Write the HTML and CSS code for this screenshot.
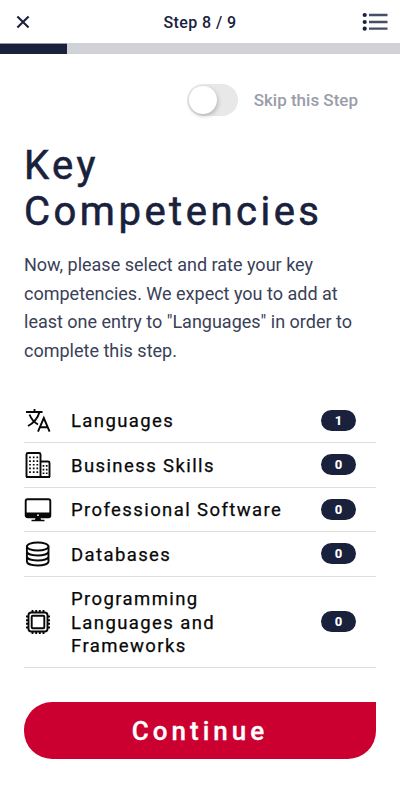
FILE: index.html
```html
<!DOCTYPE html>
<html lang="en">
<head>
<meta charset="utf-8">
<title>Key Competencies</title>
<link rel="stylesheet" href="styles.css">
</head>
<body>
<header class="topbar">
  <svg class="close" viewBox="0 0 14 14"><path d="M1.4 1.4 12.6 12.6M12.6 1.4 1.4 12.6"/></svg>
  <span class="step">Step 8 / 9</span>
  <svg class="menu" viewBox="0 0 26 20"><path d="M6.500 3H25M6.500 10H25M6.500 16.700H25"/><circle cx="2.200" cy="3" r="2.100"/><circle cx="2.200" cy="10" r="2.100"/><circle cx="2.200" cy="16.700" r="2.100"/></svg>
</header>
<div class="progress"><div class="progress-fill"></div></div>
<main>
  <div class="skip"><span class="switch"><span class="knob"></span></span><span class="skip-label">Skip this Step</span></div>
  <h1>Key Competencies</h1>
  <p class="intro">Now, please select and rate your key competencies. We expect you to add at least one entry to "Languages" in order to complete this step.</p>
  <ul class="list">
    <li>
      <svg class="icon" viewBox="0 0 28 28"><path d="M2 5H18.500M10.500 2V5M15.500 5C14 10.500 9.500 16 4 19M5.500 7.500C7 11.500 10.500 15.500 14 17.500M14 24.500 19.800 11 25.600 24.500M16 20.200H23.700"/></svg>
      <span class="name">Languages</span><span class="badge">1</span>
    </li>
    <li>
      <svg class="icon" viewBox="0 0 28 28"><path d="M2.500 26V3.500Q2.500 2 4 2H15Q16.500 2 16.500 3.500V26M16.500 10.500H24Q25.500 10.500 25.500 12V26M2 26H26"/><path class="dots" d="M6 5.500V24M9.700 5.500V24M13.300 5.500V24M19.500 14V24M22.700 14V24"/></svg>
      <span class="name">Business Skills</span><span class="badge">0</span>
    </li>
    <li>
      <svg class="icon" viewBox="0 0 28 28"><rect x="1.700" y="3.200" width="24.600" height="18" rx="1.800"/><path class="solid" d="M1.500 16.500H26.500V20Q26.500 22 24.500 22H3.500Q1.500 22 1.500 20ZM11.500 21.500H16.500L17 23.800H20.500V25.300H7.500V23.800H11Z"/><circle class="light" cx="14" cy="19.200" r=".9"/></svg>
      <span class="name">Professional Software</span><span class="badge">0</span>
    </li>
    <li>
      <svg class="icon" viewBox="0 0 28 28"><ellipse cx="13.700" cy="6.500" rx="10.800" ry="4"/><path d="M2.900 6.500V21.500C2.900 26.800 24.500 26.800 24.500 21.500V6.500M2.900 11.500C2.900 16.800 24.500 16.800 24.500 11.500M2.900 16.500C2.900 21.800 24.500 21.800 24.500 16.500"/></svg>
      <span class="name">Databases</span><span class="badge">0</span>
    </li>
    <li>
      <svg class="icon" viewBox="0 0 28 28"><rect x="4.500" y="4.500" width="19" height="19" rx="2.800"/><rect x="7.700" y="7.700" width="12.600" height="12.600" rx="1"/><path d="M8.500 2V4.500M12.200 2V4.500M15.800 2V4.500M19.500 2V4.500M8.500 23.500V26M12.200 23.500V26M15.800 23.500V26M19.500 23.500V26M2 8.500H4.500M2 12.200H4.500M2 15.800H4.500M2 19.500H4.500M23.500 8.500H26M23.500 12.200H26M23.500 15.800H26M23.500 19.500H26"/></svg>
      <span class="name">Programming Languages and Frameworks</span><span class="badge">0</span>
    </li>
  </ul>
  <button class="continue">Continue</button>
</main>
</body>
</html>
```
FILE: styles.css
```css
* { box-sizing: border-box; }
body { margin: 0; background: #fff; color: #1a213c; font-family: Roboto, "Liberation Sans", sans-serif; }
.topbar { height: 43px; padding: 0 11px 0 16px; display: grid; grid-template-columns: 27px 1fr 27px; align-items: center; }
.close { width: 14px; height: 14px; stroke: #1a213c; stroke-width: 2.100; fill: none; }
.step { text-align: center; font-size: 16px; line-height: 19px; padding-top: 1px; font-weight: 500; letter-spacing: .4px; padding-right: 5px; }
.menu { width: 27px; height: 20px; stroke: #484e66; stroke-width: 2.300; }
.menu circle { fill: #1a213c; stroke: none; }
.progress { height: 11px; background: #d1d2d8; }
.progress-fill { width: 66.700px; height: 11px; background: #1a213c; border-top: 1px solid #9598a5; }
main { padding: 30px 24px 0; }
.skip { height: 33px; display: flex; align-items: center; justify-content: flex-end; gap: 16px; padding-right: 18px; }
.switch { width: 51px; height: 32px; margin-top: -1px; border-radius: 17px; padding: 2px; background: #e8e8e8; }
.knob { display: block; width: 28px; height: 28px; border-radius: 50%; background: #fff; box-shadow: 1px 2px 4px rgba(0,0,0,.22); }
.skip-label { font-size: 17px; line-height: 20px; margin-top: -2px; font-weight: 500; color: #9a9da9; }
h1 { margin: 26px 0 0; font-size: 40px; line-height: 46px; font-weight: 400; letter-spacing: 3.500px; -webkit-text-stroke: .6px #1a213c; }
.intro { margin: 16px 0 0; font-size: 18px; line-height: 28.600px; font-weight: 400; color: #3a4058; }
.list { margin: 33px 0 0; padding: 0; list-style: none; color: #080808; }
.list li { display: flex; align-items: center; border-bottom: 1px solid #dedede; padding: 10.600px 20px 9.600px 0; }
.icon { flex: none; width: 28px; height: 28px; margin: -3px 19px -3px 0; fill: none; stroke: #080808; stroke-width: 1.900; }
.icon .dots { stroke-width: 1.700; stroke-dasharray: 1.700 2; }
.icon .solid { fill: #080808; stroke: none; }
.icon .light { fill: #fff; stroke: none; }
.name { flex: 1; padding: 1px 20px 0 0; margin-bottom: -1px; font-size: 18.500px; line-height: 23.400px; font-weight: 400; letter-spacing: 1.400px; -webkit-text-stroke: .25px #080808; }
.badge { width: 35px; height: 21px; margin-top: -1px; border-radius: 11px; background: #1a213c; color: #fff; text-align: center; font-size: 13px; line-height: 21px; font-weight: 800; }
.continue { display: block; width: 100%; height: 57px; margin: 34px 0 0; padding: 1px 0 0; border: 0; border-radius: 28px 0 28px 28px; background: #cc0030; color: #fff; font: 500 26px/56px Roboto, sans-serif; letter-spacing: 4px; -webkit-text-stroke: .3px #fff; }
```
